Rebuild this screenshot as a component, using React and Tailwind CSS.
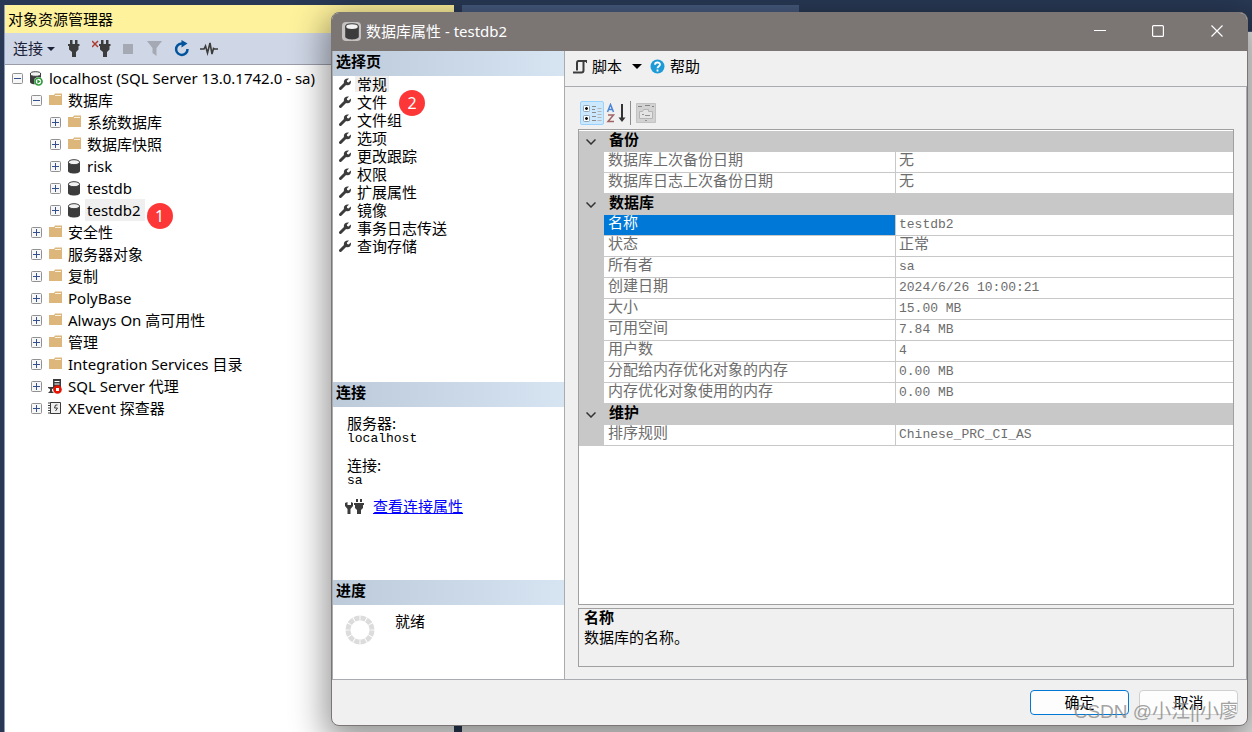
import { useState } from "react";

const uiFont = "font-['Noto_Sans','Noto_Sans_CJK_SC',sans-serif]";
const dialogFont = "font-['Noto_Sans_CJK_SC',sans-serif]";
const gridFont = "font-['Liberation_Mono','Noto_Sans_CJK_SC',monospace]";

const treeNodes = [
  { level: 0, icon: "server", label: "localhost (SQL Server 13.0.1742.0 - sa)", open: true },
  { level: 1, icon: "folder", label: "数据库", open: true },
  { level: 2, icon: "folder", label: "系统数据库" },
  { level: 2, icon: "folder", label: "数据库快照" },
  { level: 2, icon: "database", label: "risk" },
  { level: 2, icon: "database", label: "testdb" },
  { level: 2, icon: "database", label: "testdb2", selected: true, badge: 1 },
  { level: 1, icon: "folder", label: "安全性" },
  { level: 1, icon: "folder", label: "服务器对象" },
  { level: 1, icon: "folder", label: "复制" },
  { level: 1, icon: "folder", label: "PolyBase" },
  { level: 1, icon: "folder", label: "Always On 高可用性" },
  { level: 1, icon: "folder", label: "管理" },
  { level: 1, icon: "folder", label: "Integration Services 目录" },
  { level: 1, icon: "agent", label: "SQL Server 代理" },
  { level: 1, icon: "xevent", label: "XEvent 探查器" },
];

const indents = ["pl-[7px]", "pl-[26px]", "pl-[45px]"];

const pages = [
  { label: "常规" },
  { label: "文件", badge: 2 },
  { label: "文件组" },
  { label: "选项" },
  { label: "更改跟踪" },
  { label: "权限" },
  { label: "扩展属性" },
  { label: "镜像" },
  { label: "事务日志传送" },
  { label: "查询存储" },
];

const groups = [
  {
    title: "备份",
    rows: [
      ["数据库上次备份日期", "无"],
      ["数据库日志上次备份日期", "无"],
    ],
  },
  {
    title: "数据库",
    rows: [
      ["名称", "testdb2"],
      ["状态", "正常"],
      ["所有者", "sa"],
      ["创建日期", "2024/6/26 10:00:21"],
      ["大小", "15.00 MB"],
      ["可用空间", "7.84 MB"],
      ["用户数", "4"],
      ["分配给内存优化对象的内存", "0.00 MB"],
      ["内存优化对象使用的内存", "0.00 MB"],
    ],
  },
  {
    title: "维护",
    rows: [["排序规则", "Chinese_PRC_CI_AS"]],
  },
];

function DatabaseIcon({ className = "h-[15px] w-3.5" }) {
  return (
    <svg viewBox="0 0 14 15" className={className}>
      <path d="M1 3v9c0 1.600 2.700 2.500 6 2.500s6-.9 6-2.500V3z" fill="#3c3c3c" />
      <ellipse cx="7" cy="3.200" rx="5.600" ry="2.500" fill="#f2f2f2" stroke="#3c3c3c" />
    </svg>
  );
}

function TreeIcon({ type }) {
  if (type === "folder") {
    return (
      <svg viewBox="0 0 14 14" className="size-3.5">
        <path d="M1 2h5l1-1.500h7V12H1z" fill="#dcb67a" />
        <path d="M7 2.500h6" stroke="#fbf1df" />
      </svg>
    );
  }
  if (type === "database") {
    return <DatabaseIcon />;
  }
  if (type === "server") {
    return (
      <svg viewBox="0 0 14 15" className="h-[15px] w-3.5">
        <path d="M1 3v8c0 1.500 2.500 2.300 5.500 2.300s5.500-.8 5.500-2.300V3z" fill="#3c3c3c" />
        <ellipse cx="6.500" cy="3" rx="5.200" ry="2.300" fill="#f2f2f2" stroke="#3c3c3c" />
        <circle cx="9.500" cy="10.500" r="4.500" fill="#fff" />
        <circle cx="9.500" cy="10.500" r="3.500" fill="none" stroke="#2f9a3c" strokeWidth="1.700" />
        <path d="M8.300 8.300l3.200 2.200-3.200 2.200z" fill="#2f9a3c" />
      </svg>
    );
  }
  if (type === "agent") {
    return (
      <svg viewBox="0 0 14 15" className="h-[15px] w-3.5">
        <path d="M5 0h8v8H5z" fill="#3c3c3c" />
        <path d="M6.500 2.500h5M6.500 5h5" stroke="#fff" />
        <path d="M0 8h6v1.500L4 10v2l2 2H0l2-2v-2L0 9z" fill="#3c3c3c" />
        <circle cx="9.500" cy="10.500" r="4.300" fill="#e51400" />
        <path d="M8 9h3v3H8z" fill="#fff" />
      </svg>
    );
  }
  return (
    <svg viewBox="0 0 14 15" className="h-[15px] w-3.5" fill="none" stroke="#3c3c3c">
      <path d="M2.500 1.500h10v11h-10z" fill="#f0f0f0" />
      <path d="M0 2h3M0 4.500h3M0 7h3M0 9.500h3M0 12h3" />
      <path d="M9.500 4H7.500L6.500 7h3L7.500 10" />
    </svg>
  );
}

function Plug() {
  return <path d="M3 0h2.500v4H3zM8 0h2.500v4H8zM1 4h11.500v2h-1v3.500L9 12v5H5v-5L2 9.500V6H1z" />;
}

function Wrench() {
  return (
    <svg viewBox="0 0 12 12" className="mt-0.5 size-3" aria-hidden="true">
      <path d="M1.500 10.500L6.500 5.500" stroke="#3c3c3c" strokeWidth="3" strokeLinecap="round" />
      <path
        d="M10 .6L7.800 2.800l.4 1.300 1.400.5 2.200-2.200C12.400 5 11.500 7.300 8.500 7.300 6.500 7.500 5 6 4.800 4.200 4.800 1.600 7 0 10 .6z"
        fill="#3c3c3c"
      />
    </svg>
  );
}

function Badge({ children, className }) {
  return (
    <span
      className={`absolute z-10 flex size-[26px] items-center justify-center rounded-full bg-[#fd3737] text-base text-white ${uiFont} ${className}`}
    >
      {children}
    </span>
  );
}

function Expander({ open, label }) {
  return (
    <button aria-label={label} aria-expanded={!!open} className="size-[11px] shrink-0">
      <svg viewBox="0 0 11 11" className="size-[11px]">
        <rect x=".5" y=".5" width="10" height="10" rx="1" fill="#f7f7f7" stroke="#919191" />
        <path d={open ? "M2 5.500h7" : "M2 5.500h7M5.500 2v7"} stroke="#35508f" />
      </svg>
    </button>
  );
}

function ObjectExplorer() {
  return (
    <section className={`flex w-[450px] shrink-0 flex-col border-l border-[#8e9bbc] bg-white text-[15px] ${uiFont}`}>
      <h2 className="flex h-7 items-center bg-[#fff29d] pl-[3px]">对象资源管理器</h2>
      <div className="flex h-8 items-center border-b border-[#9a9ca8] bg-[#cfd6e5] pl-2 text-[#1b2238]">
        <button className="flex items-center gap-1">
          连接
          <svg viewBox="0 0 8 4" className="h-1 w-2">
            <path d="M0 0h8L4 4z" fill="#1b2238" />
          </svg>
        </button>
        <button aria-label="连接对象资源管理器" className="ml-3">
          <svg viewBox="0 0 13 17" className="h-[17px] w-[13px]" fill="#3c3c3c">
            <Plug />
          </svg>
        </button>
        <button aria-label="断开连接" className="ml-3">
          <svg viewBox="0 0 19 17" className="h-[17px] w-[19px]" fill="#3c3c3c">
            <path d="M0 1l6 6M6 1L0 7" stroke="#b03a30" strokeWidth="1.500" />
            <g transform="translate(6 0)">
              <Plug />
            </g>
          </svg>
        </button>
        <button aria-label="停止" className="ml-3 size-2.5 bg-[#a5a9b4]" />
        <button aria-label="筛选器" className="ml-3.5">
          <svg viewBox="0 0 15 15" className="size-[15px]">
            <path d="M0 0h15L9.500 7v8L5.500 12V7z" fill="#a5a9b4" />
          </svg>
        </button>
        <button aria-label="刷新" className="ml-3">
          <svg viewBox="0 0 16 17" className="h-[17px] w-4">
            <path d="M9 3.500H7.500A5.700 5.700 0 1 0 13.500 9" fill="none" stroke="#00539c" strokeWidth="2.500" />
            <path d="M7.500 0L13.500 3.500 7.500 7.500z" fill="#00539c" />
          </svg>
        </button>
        <button aria-label="活动监视器" className="ml-2.5">
          <svg viewBox="0 0 18 14" className="h-3.5 w-[18px]">
            <path d="M0 7h4l1.500-3 2 7L10 1l2 11 1.500-5.500L14.500 7H18" fill="none" stroke="#3c3c3c" strokeWidth="1.600" />
          </svg>
        </button>
      </div>
      <ul className="pt-0.5">
        {treeNodes.map((node) => (
          <li key={node.label} className={`flex h-[22px] items-center ${indents[node.level]}`}>
            <Expander open={node.open} label={node.label} />
            <span className="ml-1.5 flex w-3.5 shrink-0 justify-center">
              <TreeIcon type={node.icon} />
            </span>
            <span
              className={`relative ml-1 flex h-[22px] items-center pr-1 pl-0.5 whitespace-nowrap ${node.selected ? "bg-[#efefef]" : ""}`}
            >
              {node.label}
              {node.badge && <Badge className="top-1 left-full ml-0.5">{node.badge}</Badge>}
            </span>
          </li>
        ))}
      </ul>
    </section>
  );
}

function PanelHeading({ children }) {
  return (
    <h3 className="flex h-[25px] shrink-0 items-center bg-linear-to-r from-[#bccada] to-[#d7e4f2] pb-1 pl-[3px] font-bold">
      {children}
    </h3>
  );
}

function Sidebar() {
  return (
    <aside className="flex w-[233px] shrink-0 flex-col border-r border-l border-r-[#a9abb0] border-l-[#a9abb0] bg-white">
      <PanelHeading>选择页</PanelHeading>
      <ul className="flex-1">
        {pages.map((page, i) => (
          <li key={page.label} className="h-[18px]">
            <button className="flex items-start gap-1 pl-1.5">
              <Wrench />
              <span className={`relative px-0.5 leading-4 ${i === 0 ? "bg-[#efefef]" : ""}`}>
                {page.label}
                {page.badge && <Badge className="-top-1 left-11">{page.badge}</Badge>}
              </span>
            </button>
          </li>
        ))}
      </ul>

      <PanelHeading>连接</PanelHeading>
      <div className="h-[173px] shrink-0 pt-2 pl-3.5">
        <dl className="leading-4">
          <dt>服务器:</dt>
          <dd className={`text-[13px] leading-4 ${gridFont}`}>localhost</dd>
          <dt className="mt-2.5">连接:</dt>
          <dd className={`text-[13px] leading-4 ${gridFont}`}>sa</dd>
        </dl>
        <div className="mt-1.5 flex items-center gap-2">
          <svg viewBox="0 0 20 17" className="-ml-0.5 h-[17px] w-5" fill="#3c3c3c">
            <path d="M0 5v3l2.500 3v5h3v-5L8 8V5L6 4v3H2.500V4z" />
            <path d="M11 1h2v3h-2zM15 1h2v3h-2zM9 5h10v2h-1v3l-2 2v4h-4v-4l-2-2V7H9z" />
          </svg>
          <a href="#connection" className="text-[#0000ff] underline">
            查看连接属性
          </a>
        </div>
      </div>

      <PanelHeading>进度</PanelHeading>
      <div className="flex h-[74px] shrink-0 items-start pt-2 pl-3">
        <svg viewBox="0 0 30 30" className="mt-0.5 size-[30px]">
          <circle
            cx="15"
            cy="15"
            r="12"
            fill="none"
            stroke="#dcdcdc"
            strokeWidth="5"
            pathLength="120"
            strokeDasharray="8.500 1.500"
            strokeDashoffset="-.75"
          />
        </svg>
        <span className="ml-5 leading-4">就绪</span>
      </div>
    </aside>
  );
}

function PropertyGrid({ selected, onSelect }) {
  return (
    <div className={`min-h-0 flex-1 border border-[#a0a0a0] bg-white pt-px ${gridFont}`}>
      <table className="w-full table-fixed border-separate border-spacing-0 text-left text-[#6d6d6d]">
        <colgroup>
          <col className="w-[25px]" />
          <col className="w-[292px]" />
          <col />
        </colgroup>
        {groups.map((group) => (
          <tbody key={group.title}>
            <tr className="h-[21px] bg-[#c8c8c8] text-black">
              <td className="p-0">
                <button aria-label={group.title} className="flex w-full justify-center pr-0.5">
                  <svg viewBox="0 0 10 6" className="h-1.5 w-2.5" fill="none" stroke="#333" strokeWidth="1.500">
                    <path d="M.5.5L5 5 9.500.5" />
                  </svg>
                </button>
              </td>
              <th colSpan={2} className="p-0 pl-[5px] leading-5 font-bold">
                {group.title}
              </th>
            </tr>
            {group.rows.map(([name, value]) => {
              const active = name === selected;
              return (
                <tr key={name} className="h-[21px]" onClick={() => onSelect(name)}>
                  <td className="bg-[#c8c8c8] p-0" />
                  <th
                    scope="row"
                    className={`border-r border-b border-[#c8c8c8] p-0 pl-1 leading-5 font-normal ${active ? "bg-[#0078d7] text-white" : ""}`}
                  >
                    {name}
                  </th>
                  <td
                    className={`border-b border-[#c8c8c8] p-0 pl-[3px] leading-5 ${/[a-z0-9]/i.test(value) ? "text-[13px]" : ""}`}
                  >
                    {value}
                  </td>
                </tr>
              );
            })}
          </tbody>
        ))}
      </table>
    </div>
  );
}

function GridToolbar() {
  return (
    <div className="flex h-7 shrink-0 items-start">
      <button
        aria-label="按分类顺序"
        className="ml-0.5 flex size-6 items-center justify-center rounded-xs border border-[#99d1ff] bg-[#cce8ff]"
      >
        <svg viewBox="0 0 20 20" className="size-5">
          <g fill="#fff" stroke="#8aa4b8">
            <rect x="1.500" y="2.500" width="6" height="6" rx="1" />
            <rect x="1.500" y="12.500" width="6" height="6" rx="1" />
          </g>
          <path d="M3 5.500h3M4.500 4v3M3 15.500h3M4.500 14v3" stroke="#111" strokeWidth="1.500" />
          <path d="M10 3.500h4M10 6.500h3M10 9.500h4M10 13.500h4M10 17.500h4" stroke="#8b8b8b" />
          <path d="M15.500 5.500h4M15.500 8.500h4M15.500 11.500h4M15.500 14.500h4M15.500 17.500h4" stroke="#b5b5b5" />
        </svg>
      </button>
      <button aria-label="字母顺序" className="ml-0.5 flex h-6 w-5 items-center">
        <svg viewBox="0 0 20 20" className="size-5" fill="none">
          <path d="M1.500 9l3-7.500 3 7.500M2.500 6.500h4" stroke="#4a86d8" strokeWidth="1.500" />
          <path d="M2 12h5.500L2 18.500h6" stroke="#a06464" strokeWidth="1.500" />
          <path d="M16 1v15" stroke="#333" strokeWidth="2" />
          <path d="M12.500 14.500h7L16 19z" fill="#333" />
        </svg>
      </button>
      <span className="ml-1 h-6 w-px bg-[#8d8d8d]" />
      <button aria-label="属性页" disabled className="ml-[5px] flex h-6 items-center">
        <svg viewBox="0 0 20 20" className="size-5">
          <path d="M.5.5h19v19H.5z" fill="#d2d2d2" stroke="#c3c3c3" />
          <path d="M2 3.500h4M9 2.500h5M16 3.500h2" stroke="#858585" />
          <path d="M3.500 8.500h3l1-2h5v2h4v7h-13z" fill="#e4e4e4" stroke="#b5b5b5" />
          <path d="M6 11.500h2M9 12.500h5M9 17.500h2" stroke="#929292" />
        </svg>
      </button>
    </div>
  );
}

function PropertiesDialog() {
  const [selected, setSelected] = useState("名称");

  return (
    <section
      role="dialog"
      aria-labelledby="dialog-title"
      className="absolute top-3 right-1 bottom-1.5 left-[331px] flex flex-col overflow-hidden rounded-lg border border-[#7b7574] bg-[#f0f0f0] text-[15px] text-black shadow-[0_10px_34px_6px_rgba(0,0,0,0.42)]"
    >
      <header className={`flex h-[38px] shrink-0 items-center bg-[#7b7574] pb-0.5 text-white ${uiFont}`}>
        <span className="ml-2.5 flex size-[19px] items-center justify-center rounded-sm bg-[#c4c1c0]">
          <DatabaseIcon className="h-[17px] w-4" />
        </span>
        <h1 id="dialog-title" className="ml-[5px] flex-1">
          数据库属性 - testdb2
        </h1>
        <button aria-label="最小化" className="flex h-full w-[58px] items-center justify-center">
          <svg viewBox="0 0 12 12" className="size-3" stroke="#fff">
            <path d="M0 5.500h12" />
          </svg>
        </button>
        <button aria-label="最大化" className="flex h-full w-[58px] items-center justify-center">
          <svg viewBox="0 0 12 12" className="size-3" fill="none" stroke="#fff" strokeWidth="1.200">
            <rect x=".6" y=".6" width="10.800" height="10.800" rx="1" />
          </svg>
        </button>
        <button aria-label="关闭" className="flex h-full w-[60px] items-center justify-center">
          <svg viewBox="0 0 12 12" className="size-3" stroke="#fff" strokeWidth="1.200">
            <path d="M.5.5l11 11M11.500.5l-11 11" />
          </svg>
        </button>
      </header>

      <div className={`flex min-h-0 flex-1 border-b border-[#a9abb0] ${dialogFont}`}>
        <Sidebar />
        <main className="flex min-w-0 flex-1 flex-col">
          <div className="flex h-9 shrink-0 items-center border-b border-[#a9abb0] pb-1 pl-2">
            <button className="flex items-center">
              <svg viewBox="0 0 14 14" className="size-3.5" fill="none" stroke="#3c3c3c" strokeWidth="2">
                <path d="M14 3V1H5.500Q4 1 4 3v7.500" />
                <path d="M0 12.500h8.500q2 0 2-2V1" />
              </svg>
              <span className="ml-[5px]">脚本</span>
              <svg viewBox="0 0 10 5" className="ml-2.5 h-[5px] w-2.5">
                <path d="M0 0h10L5 5z" />
              </svg>
            </button>
            <button className="ml-2 flex items-center gap-[5px]">
              <svg viewBox="0 0 15 15" className="size-[15px]">
                <circle cx="7.500" cy="7.500" r="7" fill="#1e9bd7" />
                <path
                  d="M5 5.700C5 2.800 10 2.800 10 5.600 10 7.300 7.500 7 7.500 9.300M7.500 10.500v2"
                  fill="none"
                  stroke="#fff"
                  strokeWidth="1.800"
                />
              </svg>
              帮助
            </button>
          </div>
          <div className="flex min-h-0 flex-1 flex-col border-r border-[#a9abb0] pt-3.5 pr-3 pb-3 pl-[13px]">
            <GridToolbar />
            <PropertyGrid selected={selected} onSelect={setSelected} />
            <div className={`mt-[3px] h-[59px] shrink-0 border border-[#a0a0a0] pt-px pl-[5px] leading-5 ${gridFont}`}>
              <p className="font-bold">{selected}</p>
              <p>数据库的名称。</p>
            </div>
          </div>
        </main>
      </div>

      <footer className={`flex h-[45px] shrink-0 items-start justify-end gap-2.5 pt-2.5 pr-[9px] ${dialogFont}`}>
        <button className="h-[25px] w-[99px] rounded-sm border border-[#0078d4] bg-[#fdfdfd]">确定</button>
        <button className="h-[25px] w-[99px] rounded-sm border border-[#d0d0d0] bg-[#fdfdfd]">取消</button>
      </footer>
    </section>
  );
}

export default function App() {
  return (
    <div className="relative flex h-screen overflow-hidden bg-[#293955] pt-[5px] pl-1">
      <ObjectExplorer />
      <div className="ml-2 flex min-w-0 flex-1 flex-col">
        <div className="h-[26px] w-[337px] bg-[#465a7d]" />
        <div className="flex-1 border-t border-[#465a7d] bg-[#f0f0f0]" />
      </div>
      <PropertiesDialog />
      <span className="pointer-events-none absolute right-3.5 bottom-1.5 text-[19px] text-[#8a8a8a]/80 font-['Liberation_Sans','Noto_Sans_CJK_SC',sans-serif]">
        CSDN @小江||小廖
      </span>
    </div>
  );
}
